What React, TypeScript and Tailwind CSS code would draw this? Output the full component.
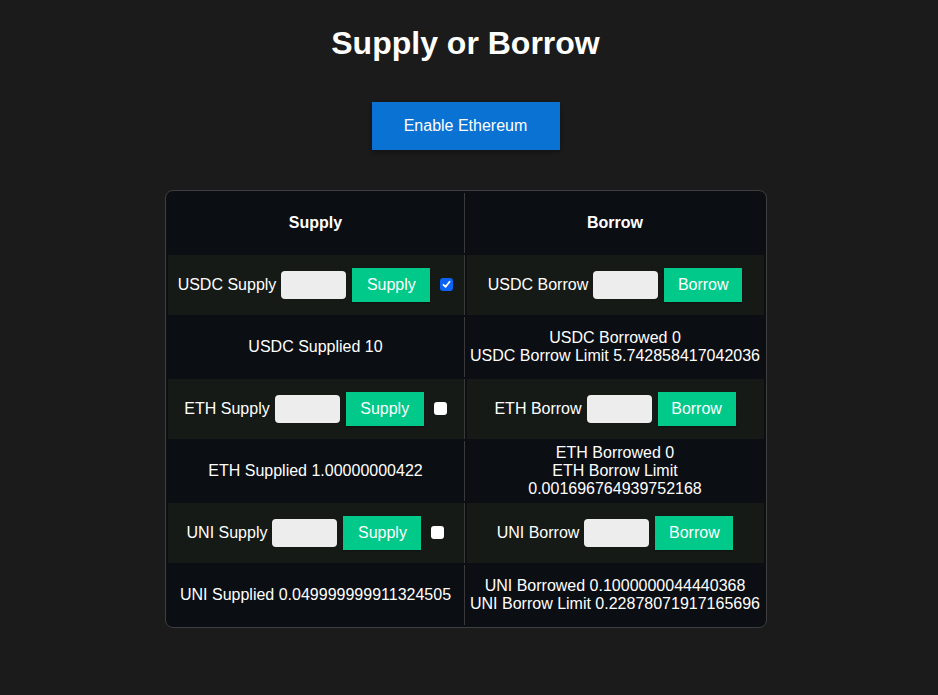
import React from 'react';

type Asset = {
  name: string;
  checked: boolean;
  supplied: string;
  borrowed: string;
  limit: string;
  limitWrap?: boolean;
};

const assets: Asset[] = [
  { name: 'USDC', checked: true, supplied: '10', borrowed: '0', limit: '5.742858417042036' },
  { name: 'ETH', checked: false, supplied: '1.00000000422', borrowed: '0', limit: '0.001696764939752168', limitWrap: true },
  { name: 'UNI', checked: false, supplied: '0.049999999911324505', borrowed: '0.1000000044440368', limit: '0.22878071917165696' },
];

const CheckBox = ({ checked }: { checked: boolean }) =>
  checked ? (
    <span className="flex h-[13px] w-[13px] items-center justify-center rounded-[3px] bg-[#0b63f6]">
      <svg width="9" height="9" viewBox="0 0 9 9" fill="none">
        <path d="M1.5 4.8 L3.6 6.8 L7.6 1.8" stroke="white" strokeWidth="1.8" strokeLinecap="round" strokeLinejoin="round" />
      </svg>
    </span>
  ) : (
    <span className="block h-[13px] w-[13px] rounded-[3px] bg-white" />
  );

const ActionCell = ({ label, action, checkbox }: { label: string; action: string; checkbox?: boolean }) => (
  <div className="flex items-center justify-center">
    <span>{label}</span>
    <span className="ml-[5px] block h-[28px] w-[65px] rounded-[4px] bg-[#ededed]" />
    <button className="ml-[6px] h-[34px] w-[78px] bg-[#00c98a] text-white shadow-[0_1px_2px_rgba(0,0,0,0.3)]">
      {action}
    </button>
    {checkbox !== undefined && (
      <span className="ml-[10px] -mt-[2px]">
        <CheckBox checked={checkbox} />
      </span>
    )}
  </div>
);

export default function App() {
  return (
    <div className="min-h-screen bg-[#1b1b1b] pr-[7px] text-white font-['Liberation_Sans',Arial,sans-serif]">
      <div className="flex flex-col items-center">
        <h1 className="mt-[25px] text-[32px] font-bold leading-[37px]">Supply or Borrow</h1>

        <button className="mt-[40px] h-[48px] w-[188px] bg-[#0a72d2] text-[16px] text-white shadow-[0_2px_4px_rgba(0,0,0,0.35)]">
          Enable Ethereum
        </button>

        <div className="mt-[40px] w-[602px] rounded-[8px] border border-[#3e3e3e] bg-[#0b0e12] p-[2px] text-[16px] leading-[18px]">
          <div className="grid grid-cols-2 gap-[2px]">
            {/* header */}
            <div className="flex h-[60px] items-center justify-center border-r border-[#3a3a3a] font-bold">Supply</div>
            <div className="flex h-[60px] items-center justify-center font-bold">Borrow</div>

            {assets.map((a) => (
              <React.Fragment key={a.name}>
                <div className="flex h-[60px] items-center justify-center border-r border-[#3a3a3a] bg-[#151a16]">
                  <ActionCell label={`${a.name} Supply`} action="Supply" checkbox={a.checked} />
                </div>
                <div className="flex h-[60px] items-center justify-center bg-[#151a16]">
                  <ActionCell label={`${a.name} Borrow`} action="Borrow" />
                </div>

                <div className="flex h-[60px] items-center justify-center border-r border-[#3a3a3a] text-center">
                  {a.name} Supplied {a.supplied}
                </div>
                <div className="flex h-[60px] flex-col items-center justify-center text-center">
                  <span>
                    {a.name} Borrowed {a.borrowed}
                  </span>
                  {a.limitWrap ? (
                    <>
                      <span>{a.name} Borrow Limit</span>
                      <span>{a.limit}</span>
                    </>
                  ) : (
                    <span>
                      {a.name} Borrow Limit {a.limit}
                    </span>
                  )}
                </div>
              </React.Fragment>
            ))}
          </div>
        </div>
      </div>
    </div>
  );
}
